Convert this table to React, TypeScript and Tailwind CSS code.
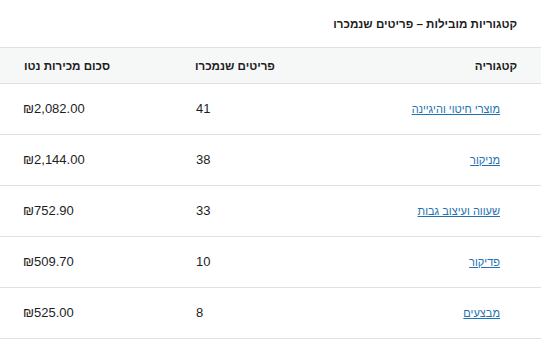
import React from 'react';

interface CategoryRow {
  name: string;
  items: number;
  total: string;
}

const rows: CategoryRow[] = [
  { name: 'מוצרי חיטוי והיגיינה', items: 41, total: '₪2,082.00' },
  { name: 'מניקור', items: 38, total: '₪2,144.00' },
  { name: 'שעווה ועיצוב גבות', items: 33, total: '₪752.90' },
  { name: 'פדיקור', items: 10, total: '₪509.70' },
  { name: 'מבצעים', items: 8, total: '₪525.00' },
];

const App: React.FC = () => {
  return (
    <div
      dir="rtl"
      className="w-[541px] h-[340px] bg-white text-[#1e1e1e] text-[13px] overflow-hidden"
      style={{ fontFamily: '"Liberation Sans", Arial, sans-serif' }}
    >
      <div className="h-[47px] flex items-center pr-[24px] font-bold text-[11.6px]">
        קטגוריות מובילות – פריטים שנמכרו
      </div>

      {/* header row */}
      <div className="grid grid-cols-[1fr_150px_174px] h-[37px] items-center bg-[#f6f7f7] border-y border-[#e0e0e0] font-bold text-[11.6px]">
        <div className="pr-[24px] text-right">קטגוריה</div>
        <div className="pl-[21px] text-left">פריטים שנמכרו</div>
        <div className="pl-[24px] text-left">סכום מכירות נטו</div>
      </div>

      {rows.map((row) => (
        <div
          key={row.name}
          className="grid grid-cols-[1fr_150px_174px] h-[51px] items-center border-b border-[#e0e0e0]"
        >
          <div className="pr-[41px] text-right text-[11px]">
            <a href="#" className="text-[#2271b1] underline">
              {row.name}
            </a>
          </div>
          <div className="pl-[22px] text-left">{row.items}</div>
          <div className="pl-[23px] text-left">{row.total}</div>
        </div>
      ))}
    </div>
  );
};

export default App;
